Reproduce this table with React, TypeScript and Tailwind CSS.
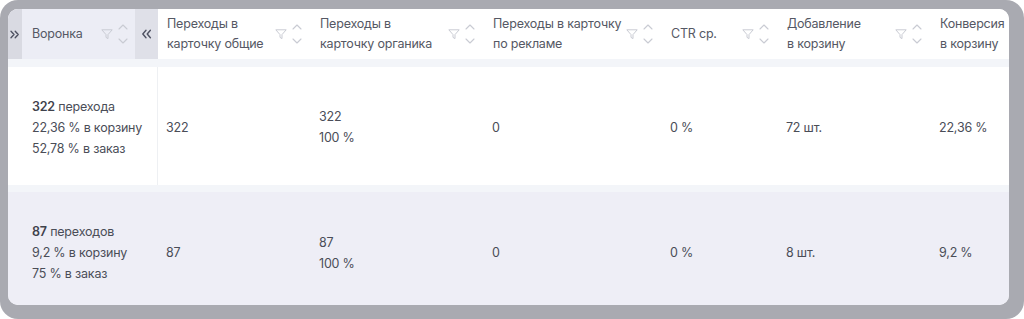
import React from "react";

const Funnel = () => (
  <svg width="12" height="11" viewBox="0 0 12 11" fill="none" className="shrink-0">
    <path d="M0.8 0.8h10.4L7 5.6v4L5 8.4V5.6z" stroke="#c9cbd3" strokeWidth="1" strokeLinejoin="round" />
  </svg>
);

const Sort = () => (
  <svg width="10" height="22" viewBox="0 0 10 22" fill="none" className="shrink-0">
    <path d="M1 6L5 2L9 6" stroke="#c9cbd3" strokeWidth="1.1" strokeLinecap="round" strokeLinejoin="round" />
    <path d="M1 16L5 20L9 16" stroke="#c9cbd3" strokeWidth="1.1" strokeLinecap="round" strokeLinejoin="round" />
  </svg>
);

const DoubleRight = () => (
  <svg width="10" height="9" viewBox="0 0 10 9" fill="none">
    <path d="M1 1.3l3 3.2L1 7.7M5.2 1.3l3 3.2L5.2 7.7" stroke="#4f5262" strokeWidth="1.4" strokeLinecap="round" strokeLinejoin="round" />
  </svg>
);

const DoubleLeft = () => (
  <svg width="11" height="10" viewBox="0 0 11 10" fill="none">
    <path d="M5 1.3L1.8 5L5 8.7M9.4 1.3L6.2 5L9.4 8.7" stroke="#4f5262" strokeWidth="1.4" strokeLinecap="round" strokeLinejoin="round" />
  </svg>
);

type Col = { w: string; title: React.ReactNode; icons: boolean };

const cols: Col[] = [
  { w: "w-[153px]", title: <>Переходы в<br />карточку общие</>, icons: true },
  { w: "w-[173px]", title: <>Переходы в<br />карточку органика</>, icons: true },
  { w: "w-[178px]", title: <>Переходы в карточку<br />по рекламе</>, icons: true },
  { w: "w-[116px]", title: <>CTR ср.</>, icons: true },
  { w: "w-[153px]", title: <>Добавление<br />в корзину</>, icons: true },
  { w: "w-[150px]", title: <>Конверсия<br />в корзину</>, icons: false },
];

const HeaderCell = ({ c }: { c: Col }) => (
  <div className={`${c.w} shrink-0 h-full flex items-center justify-between pl-[9px] pr-[9px] bg-white`}>
    <div className="leading-[20px] text-[#555864] whitespace-nowrap">{c.title}</div>
    {c.icons && (
      <div className="flex items-center gap-[5px]">
        <Funnel />
        <Sort />
      </div>
    )}
  </div>
);

type RowData = {
  bg: string;
  pt: string;
  first: [string, string, string, string];
  vals: React.ReactNode[];
  sep: boolean;
};

const rows: RowData[] = [
  {
    bg: "bg-white",
    pt: "pt-[2px]",
    first: ["322", " перехода", "22,36 % в корзину", "52,78 % в заказ"],
    vals: ["322", <>322<br />100 %</>, "0", "0 %", "72 шт.", "22,36 %"],
    sep: true,
  },
  {
    bg: "bg-[#eeeef6]",
    pt: "pt-[3px]",
    first: ["87", " переходов", "9,2 % в корзину", "75 % в заказ"],
    vals: ["87", <>87<br />100 %</>, "0", "0 %", "8 шт.", "9,2 %"],
    sep: false,
  },
];

const Row = ({ r }: { r: RowData }) => (
  <div className={`flex h-[118px] shrink-0 ${r.bg}`}>
    <div className={`w-[150px] shrink-0 flex items-center pl-[24px] ${r.pt} ${r.sep ? "border-r border-[#eef0f3]" : ""}`}>
      <div className="leading-[21px] text-[#4a4d57]">
        <div>
          <span className="font-semibold text-[#3f424c]">{r.first[0]}</span>
          {r.first[1]}
        </div>
        <div>{r.first[2]}</div>
        <div>{r.first[3]}</div>
      </div>
    </div>
    {r.vals.map((v, i) => (
      <div
        key={i}
        className={`${cols[i].w} shrink-0 flex items-center pl-[9px] ${r.pt} leading-[21px] text-[#4a4d57] whitespace-nowrap ${i === 0 ? "-ml-px" : ""}`}
      >
        <div>{v}</div>
      </div>
    ))}
  </div>
);

export default function App() {
  return (
    <div
      className="w-[1024px] h-[319px] bg-white overflow-hidden text-[12.5px] tracking-[-0.2px]"
      style={{ fontFamily: "Inter, 'Noto Sans', sans-serif" }}
    >
      <div className="h-full rounded-[18px] bg-[#a9aab1] pt-[9px] pl-[8px] pr-[15px] pb-[14px]">
        <div className="h-full bg-white rounded-[10px] overflow-hidden flex flex-col">
          <div className="flex h-[50px] shrink-0">
            <div className="w-[150px] shrink-0 h-full flex items-center bg-[#ecedf5]">
              <div className="w-[14px] h-full bg-[#d9dae2] flex items-center justify-center">
                <DoubleRight />
              </div>
              <div className="flex-1 flex items-center justify-between pl-[10px] pr-[7px]">
                <span className="text-[#555864]">Воронка</span>
                <div className="flex items-center gap-[5px]">
                  <Funnel />
                  <Sort />
                </div>
              </div>
              <div className="w-[23px] h-full bg-[#dfe0e8] flex items-center justify-center">
                <DoubleLeft />
              </div>
            </div>
            {cols.map((c, i) => (
              <HeaderCell key={i} c={c} />
            ))}
          </div>
          <div className="h-[8px] shrink-0 bg-[#f3f5f9]" />
          <Row r={rows[0]} />
          <div className="h-[7px] shrink-0 bg-[#f3f5f9]" />
          <Row r={rows[1]} />
        </div>
      </div>
    </div>
  );
}
